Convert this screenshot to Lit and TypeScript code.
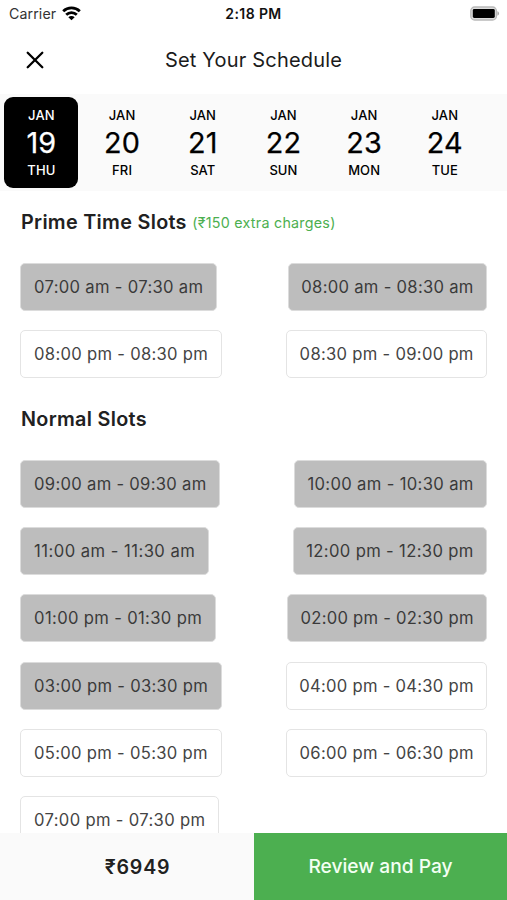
import { LitElement, html, css } from "lit";
import { customElement, property } from "lit/decorators.js";
import { styleMap } from "lit/directives/style-map.js";

interface Slot {
  label: string;
  taken?: boolean;
  track?: number;
}

const DAYS: [string, string][] = [
  ["19", "THU"], ["20", "FRI"], ["21", "SAT"], ["22", "SUN"], ["23", "MON"], ["24", "TUE"],
];

const PRIME: Slot[] = [
  { label: "07:00 am - 07:30 am", taken: true, track: 0.32 },
  { label: "08:00 am - 08:30 am", taken: true },
  { label: "08:00 pm - 08:30 pm" },
  { label: "08:30 pm - 09:00 pm" },
];

const NORMAL: Slot[] = [
  { label: "09:00 am - 09:30 am", taken: true },
  { label: "10:00 am - 10:30 am", taken: true, track: 0.35 },
  { label: "11:00 am - 11:30 am", taken: true, track: 0.47 },
  { label: "12:00 pm - 12:30 pm", taken: true, track: 0.36 },
  { label: "01:00 pm - 01:30 pm", taken: true, track: 0.35 },
  { label: "02:00 pm - 02:30 pm", taken: true, track: 0.27 },
  { label: "03:00 pm - 03:30 pm", taken: true },
  { label: "04:00 pm - 04:30 pm", track: 0.27 },
  { label: "05:00 pm - 05:30 pm" },
  { label: "06:00 pm - 06:30 pm" },
  { label: "07:00 pm - 07:30 pm", track: 0.34 },
];

@customElement("status-bar")
class StatusBar extends LitElement {
  static styles = css`
    :host { display: grid; grid-template-columns: 1fr auto 1fr; align-items: center; height: 27px; padding: 0 7px 0 9px; color: #111; }
    .carrier { display: flex; align-items: center; gap: 6px; font-size: 14.2px; letter-spacing: 0.1px; color: #333; }
    .time { font-size: 14px; font-weight: 600; letter-spacing: 0.4px; margin-right: 2px; }
    .battery { justify-self: end; margin-top: -1px; }
    svg { display: block; }
    .wifi { margin: -1px 0 0 0; }
  `;
  render() {
    return html`
      <div class="carrier">
        <span>Carrier</span>
        <svg class="wifi" width="19" height="15" viewBox="0 0 19 15">
          <g fill="none" stroke="#000" stroke-width="2.8">
            <path d="M1.2 5.2C5.8 .8 13.2 .8 17.8 5.2" />
            <path d="M4.2 8.8C7.2 5.9 11.8 5.9 14.8 8.8" />
          </g>
          <path d="M6.3 11.2C8.2 9.5 10.8 9.5 12.7 11.2L9.5 14.3Z" />
        </svg>
      </div>
      <div class="time">2:18 PM</div>
      <svg class="battery" width="31" height="15" viewBox="0 0 31 15">
        <rect x="1.8" y="1" width="25.6" height="13" rx="3.8" fill="#ddd" stroke="#b9b9b9" stroke-width="1.3" />
        <rect x="3.8" y="3" width="22" height="9" rx="1.4" />
        <path d="M28.4 5.3C30.6 6 30.6 9 28.4 9.7Z" fill="#aaa" />
      </svg>
    `;
  }
}

@customElement("day-strip")
class DayStrip extends LitElement {
  static styles = css`
    :host { display: flex; gap: 6.7px; height: 97px; padding: 3px 4.4px; box-sizing: border-box; background: #fafafa; color: #000; }
    .day { width: 74px; height: 91px; border-radius: 9px; display: flex; flex-direction: column; align-items: center; box-sizing: border-box; padding-top: 9.5px; }
    .selected { background: #000; color: #fff; }
    .small { font-size: 13px; line-height: 17px; font-weight: 450; letter-spacing: 0.1px; }
    .num { font-size: 28.8px; line-height: 38px; font-weight: 400; letter-spacing: 0.1px; -webkit-text-stroke: 0.25px currentColor; }
  `;
  render() {
    return DAYS.map(([num, name], i) => html`
      <div class="day ${i === 0 ? "selected" : ""}">
        <span class="small">JAN</span>
        <span class="num">${num}</span>
        <span class="small">${name}</span>
      </div>
    `);
  }
}

@customElement("slot-section")
class SlotSection extends LitElement {
  @property() heading = "";
  @property() note = "";
  @property({ attribute: false }) slots: Slot[] = [];
  static styles = css`
    :host { display: block; padding: 0 19.6px 0 20.4px; }
    .title { display: flex; align-items: center; gap: 5.5px; height: 24px; margin: 0 0 28.9px 0.6px; }
    h2 { margin: 0; font-size: 19.8px; font-weight: 600; letter-spacing: 0.3px; color: #212121; }
    .note { font-size: 14.3px; letter-spacing: 0.25px; color: #4caf50; }
    .grid { display: flex; flex-wrap: wrap; justify-content: space-between; row-gap: 19.2px; }
    .cell { width: 50%; display: flex; }
    .cell:nth-child(even) { justify-content: flex-end; }
    .slot { height: 48px; box-sizing: border-box; border: 1.4px solid #e4e4e4; border-radius: 5px; padding: 0 12.7px; line-height: 46px; font-size: 16.6px; letter-spacing: 0.3px; color: #444; white-space: nowrap; background: #fff; }
    .taken { background: #bdbdbd; border-color: #dcdcdc; color: #3a3a3a; }
  `;
  render() {
    return html`
      <div class="title"><h2>${this.heading}</h2>${this.note ? html`<span class="note">${this.note}</span>` : ""}</div>
      <div class="grid">
        ${this.slots.map((s) => html`<div class="cell"><div class="slot ${s.taken ? "taken" : ""}" style=${styleMap({ letterSpacing: `${s.track ?? 0.3}px` })}>${s.label}</div></div>`)}
      </div>
    `;
  }
}

@customElement("app-root")
class AppRoot extends LitElement {
  static styles = css`
    :host { display: flex; flex-direction: column; width: 507px; height: 900px; overflow: hidden; background: #fff; font-family: Inter, "Noto Sans", sans-serif; }
    header { display: grid; grid-template-columns: 70px 1fr 70px; align-items: center; height: 67px; padding-bottom: 2px; box-sizing: border-box; flex: none; }
    .close { justify-self: center; display: block; }
    h1 { margin: 0; text-align: center; font-size: 20px; font-weight: 400; letter-spacing: 0.18px; color: #1b1b1b; }
    main { flex: 1; min-height: 0; overflow: hidden; display: flex; flex-direction: column; gap: 28.7px; padding-top: 19.4px; }
    slot-section { flex: none; }
    footer { flex: none; height: 67px; display: grid; grid-template-columns: 254px 1fr; align-items: center; background: #fafafa; }
    .total { padding-left: 21px; text-align: center; font-size: 19.6px; font-weight: 600; letter-spacing: 0.8px; color: #212121; }
    .pay { height: 67px; line-height: 67px; text-align: center; font-size: 19.2px; font-weight: 450; letter-spacing: 0; color: #f3fff3; background: #4caf50; }
  `;
  render() {
    return html`
      <status-bar></status-bar>
      <header>
        <svg class="close" width="20" height="20" viewBox="0 0 20 20" fill="none" stroke="#000" stroke-width="2.3" stroke-linecap="round">
          <path d="M2.7 2.7L17.3 17.3M17.3 2.7L2.7 17.3" />
        </svg>
        <h1>Set Your Schedule</h1>
      </header>
      <day-strip></day-strip>
      <main>
        <slot-section heading="Prime Time Slots" note="(₹150 extra charges)" .slots=${PRIME}></slot-section>
        <slot-section heading="Normal Slots" .slots=${NORMAL}></slot-section>
      </main>
      <footer>
        <div class="total">₹6949</div>
        <div class="pay">Review and Pay</div>
      </footer>
    `;
  }
}
